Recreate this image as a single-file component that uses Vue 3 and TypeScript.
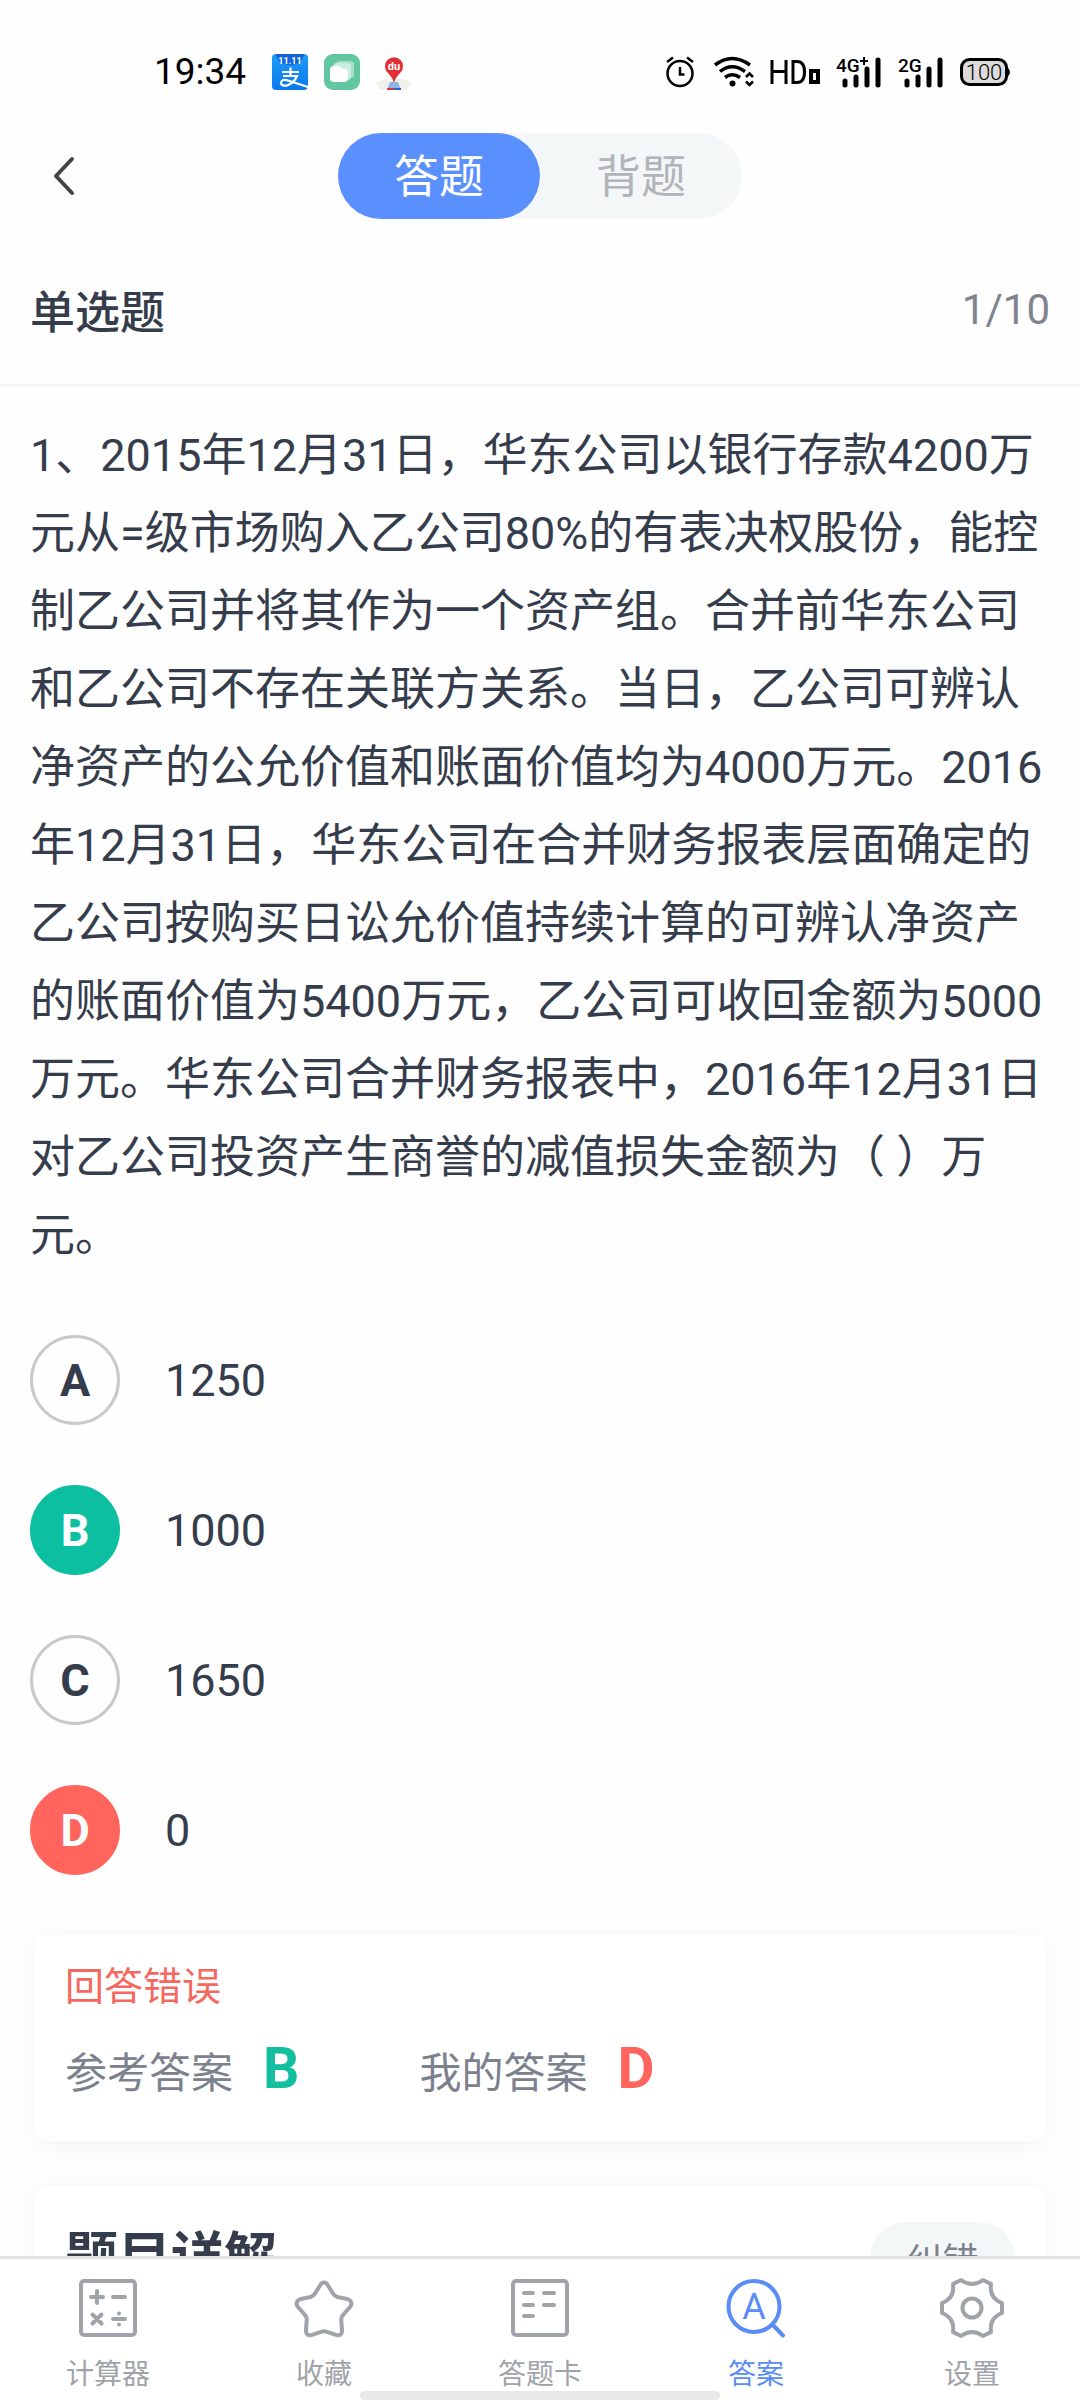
<script setup lang="ts">
import { ref } from 'vue'

type Mode = 'answer' | 'recite'
type State = 'plain' | 'right' | 'wrong'
type TabId = 'calculator' | 'favorite' | 'sheet' | 'answer' | 'settings'

interface Option {
  key: string
  text: string
  state: State
}

const mode = ref<Mode>('answer')
const activeTab = ref<TabId>('answer')

const modes: { id: Mode; label: string }[] = [
  { id: 'answer', label: '答题' },
  { id: 'recite', label: '背题' },
]

const question =
  '1、2015年12月31日，华东公司以银行存款4200万元从=级市场购入乙公司80%的有表决权股份，能控制乙公司并将其作为一个资产组。合并前华东公司和乙公司不存在关联方关系。当日，乙公司可辨认净资产的公允价值和账面价值均为4000万元。2016年12月31日，华东公司在合并财务报表层面确定的乙公司按购买日讼允价值持续计算的可辨认净资产的账面价值为5400万元，乙公司可收回金额为5000万元。华东公司合并财务报表中，2016年12月31日对乙公司投资产生商誉的减值损失金额为（ ）万元。'

const options: Option[] = [
  { key: 'A', text: '1250', state: 'plain' },
  { key: 'B', text: '1000', state: 'right' },
  { key: 'C', text: '1650', state: 'plain' },
  { key: 'D', text: '0', state: 'wrong' },
]

const tabs: { id: TabId; label: string }[] = [
  { id: 'calculator', label: '计算器' },
  { id: 'favorite', label: '收藏' },
  { id: 'sheet', label: '答题卡' },
  { id: 'answer', label: '答案' },
  { id: 'settings', label: '设置' },
]
</script>

<template>
  <div class="app">
    <div class="status">
      <span class="time">19:34</span>
      <svg width="36" height="36" viewBox="0 0 36 36" aria-hidden="true">
        <defs>
          <linearGradient id="pay" x1="0" y1="0" x2="0" y2="1">
            <stop offset="0" stop-color="#1e9df6" />
            <stop offset="1" stop-color="#0b78ee" />
          </linearGradient>
        </defs>
        <rect width="36" height="36" rx="4" fill="url(#pay)" />
        <path d="M4 0H32Q30 11 18 11Q6 11 4 0Z" fill="#1463d8" />
        <text x="18" y="10" class="pay-date">11.11</text>
        <path d="M10 18H27M18.500 13.500V22M11 22H25Q22 29 15 31.500Q9 32.500 9 28.500Q10 24.500 16 26.500L36 33" fill="none" stroke="#fff" stroke-width="2.200" />
      </svg>
      <svg width="36" height="36" viewBox="0 0 36 36" aria-hidden="true">
        <rect width="36" height="36" rx="9" fill="#62c6a0" />
        <rect x="12" y="7" width="18" height="17" rx="4" fill="#a6e0ca" />
        <rect x="9" y="9" width="18" height="17" rx="4" fill="#c9eedf" />
        <path d="M6 16Q6 12 10 12H15L18 15H21Q24 15 24 18V24Q24 28 20 28H10Q6 28 6 24Z" fill="#fff" />
      </svg>
      <svg width="36" height="36" viewBox="0 0 36 36" aria-hidden="true">
        <path d="M0 28L10 25L26 25L36 28L30 36H4Z" fill="#f1f1ec" />
        <path d="M14 28H22L25 36H11Z" fill="#8fb6e6" />
        <path d="M11 34H18V36H11Z" fill="#e5343c" />
        <path d="M18 34H25V36H18Z" fill="#2f62c4" />
        <path d="M18 29Q17 24 11.500 18.500A9 9 0 1 1 24.500 18.500Q19 24 18 29Z" fill="#e02f35" />
        <text x="18" y="16" class="du">du</text>
      </svg>
      <span class="grow"></span>
      <svg width="28" height="32" viewBox="0 0 28 32" fill="none" stroke="#000" stroke-width="2.500" aria-hidden="true">
        <circle cx="14" cy="17.500" r="12.500" />
        <path d="M14 11V18.500H18.500M1 6L7 1.500M27 6L21 1.500" />
      </svg>
      <svg class="wifi" width="40" height="32" viewBox="0 0 40 32" fill="none" stroke="#000" aria-hidden="true">
        <path d="M1 9Q18 -4 36 9M6 15.500Q18 6 31 15.500M11 21.500Q18 16 26 21.500" stroke-width="3.500" />
        <circle cx="18.500" cy="27.500" r="3" fill="#000" stroke="none" />
        <path d="M32 21L35.500 17.500L39 21M32 25.500L35.500 29L39 25.500" stroke-width="2.500" />
      </svg>
      <svg width="50" height="32" viewBox="0 0 50 32" fill="none" stroke="#000" stroke-width="3" aria-hidden="true">
        <path d="M2 4V28M16 4V28M2 15.500H16M23 5.500V26.500H27Q34.500 26.500 34.500 16Q34.500 5.500 27 5.500Z" />
        <rect x="41" y="15" width="7" height="11" stroke-width="4" />
      </svg>
      <svg width="46" height="32" viewBox="0 0 46 32" aria-hidden="true">
        <text x="0" y="16" class="net">4G</text>
        <path d="M24 5H32M28 1V9" stroke="#000" stroke-width="2" />
        <path d="M9 25V29M20 21V29M31 13V29M42 4V29" stroke="#000" stroke-width="5" stroke-linecap="round" />
      </svg>
      <svg width="46" height="32" viewBox="0 0 46 32" aria-hidden="true">
        <text x="0" y="16" class="net">2G</text>
        <path d="M9 25V29M20 21V29M31 13V29M42 4V29" stroke="#000" stroke-width="5" stroke-linecap="round" />
      </svg>
      <svg width="50" height="28" viewBox="0 0 50 28" aria-hidden="true">
        <rect x="1.500" y="1.500" width="45" height="25" rx="8" fill="#dcdcdc" stroke="#000" stroke-width="3" />
        <path d="M47 9Q50 11 50 14Q50 17 47 19Z" />
        <text x="24" y="22" class="charge">100</text>
      </svg>
    </div>

    <header class="top">
      <button class="back" type="button" aria-label="返回">
        <svg width="24" height="40" viewBox="0 0 24 40" fill="none" stroke="#444" stroke-width="4" stroke-linecap="round" stroke-linejoin="round">
          <path d="M20 3L4 20L20 37" />
        </svg>
      </button>
      <div class="modes">
        <button
          v-for="m in modes"
          :key="m.id"
          type="button"
          class="mode"
          :class="{ on: mode === m.id }"
          @click="mode = m.id"
        >{{ m.label }}</button>
      </div>
      <span class="side"></span>
    </header>

    <div class="kind">
      <h1>单选题</h1>
      <span>1/10</span>
    </div>

    <main class="body">
      <p class="question">{{ question }}</p>

      <div class="options">
        <button v-for="o in options" :key="o.key" type="button" class="option">
          <span class="badge" :class="o.state">{{ o.key }}</span>
          <span>{{ o.text }}</span>
        </button>
      </div>

      <section class="card result">
        <p class="verdict">回答错误</p>
        <div class="answers">
          <p class="answer">参考答案<b class="good">B</b></p>
          <p class="answer">我的答案<b class="bad">D</b></p>
        </div>
      </section>

      <section class="card detail">
        <h2>题目详解</h2>
        <button class="report" type="button">纠错</button>
      </section>
    </main>

    <nav class="tabs">
      <button
        v-for="t in tabs"
        :key="t.id"
        type="button"
        class="tab"
        :class="{ current: activeTab === t.id }"
        @click="activeTab = t.id"
      >
        <svg width="64" height="64" viewBox="-32 -32 64 64" fill="none" stroke="currentColor" stroke-width="4" stroke-linecap="round" stroke-linejoin="round" aria-hidden="true">
          <template v-if="t.id === 'calculator'">
            <rect x="-27" y="-27" width="54" height="54" rx="3" />
            <path d="M-17 -11H-5M-11 -17V-5M5 -11H17M-15.500 6.500L-6.500 15.500M-6.500 6.500L-15.500 15.500M5 11H17M11 5.500V5.600M11 16.500V16.600" />
          </template>
          <path
            v-else-if="t.id === 'favorite'"
            d="M-4 -22.500C-2 -26.500 2 -26.500 4 -22.500L9 -14.500Q10.500 -12 13.500 -11L23 -9C27.500 -8 28.500 -4 26 -1L19 7Q17 9 17.300 12L18 22C18.300 26.500 15.500 28 12 26.800L3 23.800Q0 22.800 -3 23.800L-12 26.800C-15.500 28 -18.300 26.500 -18 22L-17.300 12Q-17 9 -19 7L-26 -1C-28.500 -4 -27.500 -8 -23 -9L-13.500 -11Q-10.500 -12 -9 -14.500Z"
          />
          <template v-else-if="t.id === 'sheet'">
            <rect x="-27" y="-27" width="54" height="54" rx="3" />
            <path d="M-16 -15H-7M-16 -3H-7M-16 8H-7M4 -15H14M4 -3H14" />
          </template>
          <template v-else-if="t.id === 'answer'">
            <circle cx="-2" cy="-1.500" r="25.500" />
            <path d="M17 17L27 27.500" />
            <text x="-2" y="11" class="glyph">A</text>
          </template>
          <template v-else>
            <path d="M-11 -28Q0 -20 11 -28L19 -24Q17 -10 30 -5V5Q17 10 19 24L11 28Q0 20 -11 28L-19 24Q-17 10 -30 5V-5Q-17 -10 -19 -24Z" />
            <circle r="9.500" />
          </template>
        </svg>
        <span>{{ t.label }}</span>
      </button>
      <i class="home"></i>
    </nav>
  </div>
</template>

<style>
body {
  margin: 0;
  background: #fff;
}
</style>

<style scoped>
.app {
  display: flex;
  flex-direction: column;
  height: 100vh;
  overflow: hidden;
  background: #fefefe;
  color: #353c4b;
  font-family: Roboto, 'Noto Sans CJK SC', sans-serif;
  font-size: 45px;
}
button {
  padding: 0;
  border: 0;
  background: none;
  color: inherit;
  font: inherit;
  cursor: pointer;
}
p,
h1,
h2 {
  margin: 0;
}
svg {
  display: block;
  flex: none;
  overflow: visible;
}

.status {
  display: flex;
  align-items: center;
  gap: 16px;
  height: 72px;
  padding: 36px 70px 0 154px;
}
.time {
  margin-right: 10px;
  color: #000;
  font-size: 37px;
  line-height: 40px;
}
.grow {
  flex: 1;
}
.wifi {
  margin-left: 4px;
}
.pay-date {
  fill: #fff;
  font-size: 9px;
  font-weight: 700;
  text-anchor: middle;
}
.du {
  fill: #fff;
  font-size: 11px;
  font-weight: 700;
  text-anchor: middle;
}
.net {
  font-size: 19px;
  font-weight: 500;
}
.charge {
  font-size: 22px;
  font-weight: 300;
  text-anchor: middle;
}

.top {
  display: flex;
  align-items: center;
  justify-content: space-between;
  height: 136px;
  padding: 0 30px;
}
.back,
.side {
  width: 90px;
}
.back {
  display: flex;
  padding-left: 22px;
  box-sizing: border-box;
}
.modes {
  display: flex;
  border-radius: 43px;
  background: #f4f7f7;
}
.mode {
  box-sizing: border-box;
  width: 202px;
  height: 86px;
  padding-bottom: 5px;
  border-radius: 43px;
  color: #b1b5bb;
}
.mode.on {
  background: #5a8ffe;
  color: #fff;
}

.kind {
  display: flex;
  align-items: center;
  justify-content: space-between;
  height: 131px;
  padding: 0 30px 9px;
  border-bottom: 3px solid #f4f6f6;
}
.kind h1 {
  font-size: 45px;
  font-weight: 500;
}
.kind span {
  color: #7f848f;
  font-size: 42px;
}

.body {
  flex: 1;
  min-height: 0;
  padding: 30px 30px 0;
  overflow-y: auto;
  scrollbar-width: none;
}
.question {
  line-height: 78px;
}
.options {
  display: flex;
  flex-direction: column;
  gap: 60px;
  margin: 60px 0;
}
.option {
  display: flex;
  align-items: center;
  gap: 45px;
  text-align: left;
}
.badge {
  display: flex;
  align-items: center;
  justify-content: center;
  box-sizing: border-box;
  width: 90px;
  height: 90px;
  border: 3px solid #c9c9c9;
  border-radius: 50%;
  font-weight: 700;
}
.badge.right {
  border-color: #0bbfa0;
  background: #0bbfa0;
  color: #fff;
}
.badge.wrong {
  border-color: #ff655d;
  background: #ff655d;
  color: #fff;
}

.card {
  margin: 0 5px 45px;
  border-radius: 12px;
  background: #fff;
  box-shadow: 0 3px 30px rgba(0, 0, 0, 0.05);
}
.result {
  padding: 24px 30px 28px;
}
.verdict {
  color: #f4685f;
  font-size: 39px;
  line-height: 57px;
}
.answers {
  display: flex;
  gap: 120px;
  margin-top: 14px;
}
.answer {
  display: flex;
  align-items: baseline;
  gap: 30px;
  color: #7b818d;
  font-size: 42px;
  line-height: 78px;
}
.answer b {
  font-size: 57px;
}
.good {
  color: #12bf9f;
}
.bad {
  color: #ff655d;
}
.detail {
  display: flex;
  align-items: flex-start;
  justify-content: space-between;
  padding: 36px 30px;
}
.detail h2 {
  font-size: 53px;
  font-weight: 700;
  line-height: 72px;
}
.report {
  width: 145px;
  height: 72px;
  border-radius: 36px;
  background: #f4f7f7;
  color: #7b818d;
  font-size: 36px;
}

.tabs {
  position: relative;
  display: flex;
  height: 141px;
  border-top: 3px solid #e3e3e4;
  background: #fff;
}
.tab {
  display: flex;
  flex: 1;
  flex-direction: column;
  align-items: center;
  gap: 15px;
  padding-top: 17px;
  color: #a0a3a9;
  font-size: 28px;
  line-height: 40px;
}
.tab.current {
  color: #5a8cf6;
}
.glyph {
  fill: currentColor;
  stroke: none;
  font-size: 36px;
  text-anchor: middle;
}
.home {
  position: absolute;
  bottom: 0;
  left: 50%;
  width: 360px;
  height: 9px;
  margin-left: -180px;
  border-radius: 5px;
  background: #e9e9e9;
}
</style>
